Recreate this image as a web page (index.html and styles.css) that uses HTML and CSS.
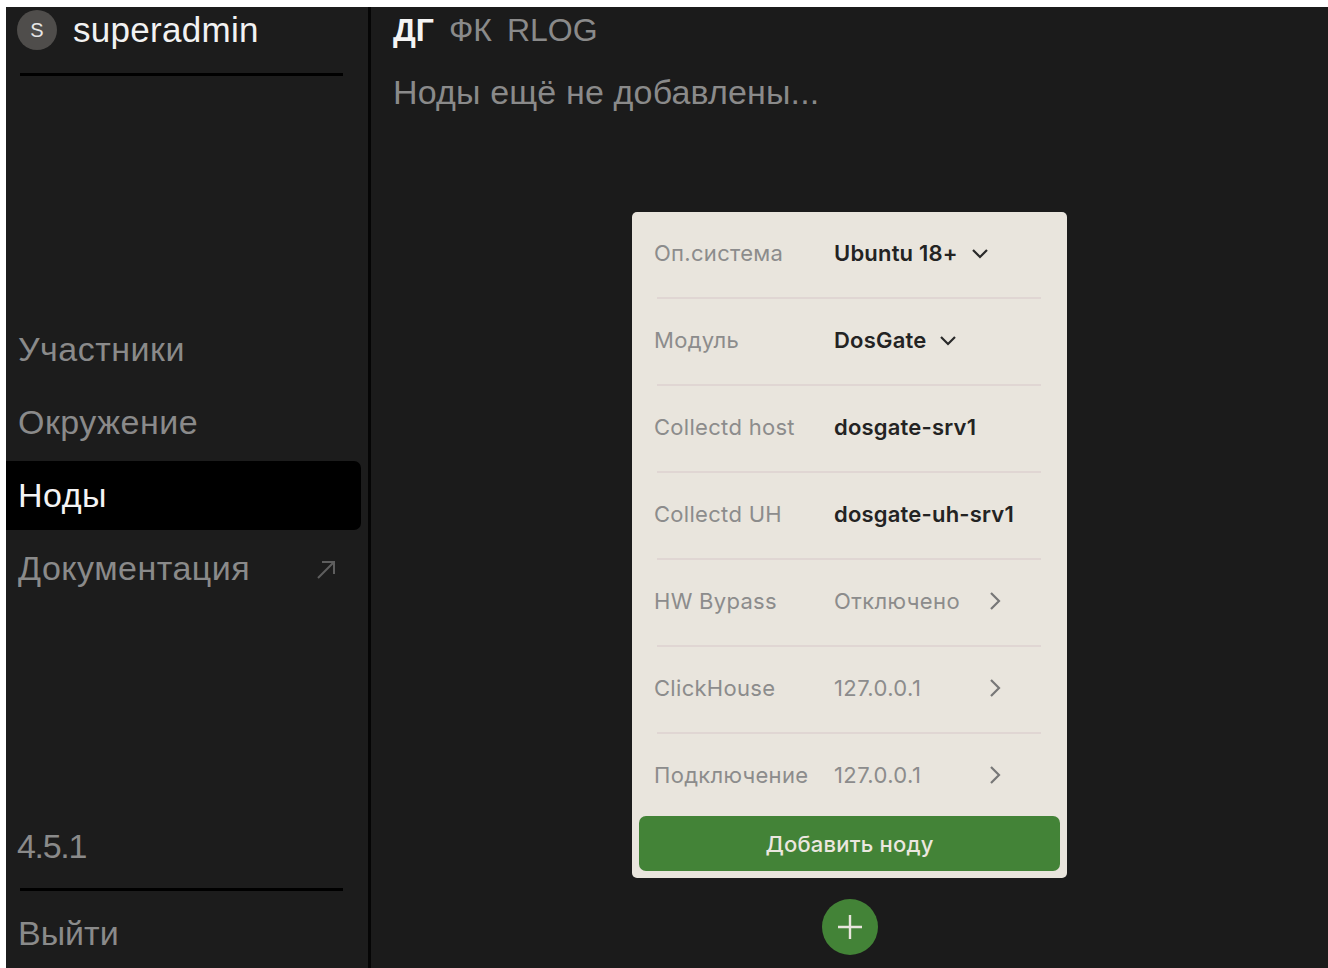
FILE: index.html
```html
<!DOCTYPE html>
<html lang="ru">
<head>
<meta charset="utf-8">
<title>Ноды</title>
<link rel="stylesheet" href="styles.css">
</head>
<body>
<div class="app">
  <aside class="sidebar">
    <div class="user">
      <span class="avatar">S</span>
      <span class="user-name">superadmin</span>
    </div>
    <div class="rule"></div>
    <nav class="nav">
      <a class="nav-item">Участники</a>
      <a class="nav-item">Окружение</a>
      <a class="nav-item active">Ноды</a>
      <a class="nav-item external">Документация
        <svg class="ext-icon" viewBox="0 0 24 24" width="24" height="24"><path d="M4 21L20 5M8 5h12v12" fill="none" stroke="currentColor" stroke-width="2"/></svg>
      </a>
    </nav>
    <div class="version">4.5.1</div>
    <div class="rule"></div>
    <a class="logout">Выйти</a>
  </aside>
  <main class="main">
    <div class="tabs">
      <span class="tab current">ДГ</span>
      <span class="tab">ФК</span>
      <span class="tab">RLOG</span>
    </div>
    <p class="empty">Ноды ещё не добавлены...</p>
    <div class="stage">
      <section class="card">
        <div class="row">
          <span class="label">Оп.система</span>
          <span class="value strong">Ubuntu 18+
            <svg class="chev-down" viewBox="0 0 20 20" width="20" height="20"><path d="M3 7l7 7 7-7" fill="none" stroke="currentColor" stroke-width="2.2"/></svg>
          </span>
        </div>
        <div class="sep"></div>
        <div class="row">
          <span class="label">Модуль</span>
          <span class="value strong">DosGate
            <svg class="chev-down" viewBox="0 0 20 20" width="20" height="20"><path d="M3 7l7 7 7-7" fill="none" stroke="currentColor" stroke-width="2.2"/></svg>
          </span>
        </div>
        <div class="sep"></div>
        <div class="row">
          <span class="label">Collectd host</span>
          <span class="value strong">dosgate-srv1</span>
        </div>
        <div class="sep"></div>
        <div class="row">
          <span class="label">Collectd UH</span>
          <span class="value strong">dosgate-uh-srv1</span>
        </div>
        <div class="sep"></div>
        <div class="row">
          <span class="label">HW Bypass</span>
          <span class="value muted">Отключено</span>
          <svg class="chev-right" viewBox="0 0 16 22" width="16" height="22"><path d="M3 3l8 8-8 8" fill="none" stroke="currentColor" stroke-width="2.2"/></svg>
        </div>
        <div class="sep"></div>
        <div class="row">
          <span class="label">ClickHouse</span>
          <span class="value muted">127.0.0.1</span>
          <svg class="chev-right" viewBox="0 0 16 22" width="16" height="22"><path d="M3 3l8 8-8 8" fill="none" stroke="currentColor" stroke-width="2.2"/></svg>
        </div>
        <div class="sep"></div>
        <div class="row last">
          <span class="label">Подключение</span>
          <span class="value muted">127.0.0.1</span>
          <svg class="chev-right" viewBox="0 0 16 22" width="16" height="22"><path d="M3 3l8 8-8 8" fill="none" stroke="currentColor" stroke-width="2.2"/></svg>
        </div>
        <button class="add-btn">Добавить ноду</button>
      </section>
      <button class="fab" aria-label="Добавить">
        <svg viewBox="0 0 32 32" width="32" height="32"><path d="M16 4v24M4 16h24" fill="none" stroke="currentColor" stroke-width="2.4"/></svg>
      </button>
    </div>
  </main>
</div>
</body>
</html>
```

FILE: styles.css
```css
html, body {
  height: 100%;
}

body {
  margin: 7px 0 0 6px;
  background: #ffffff;
  overflow: hidden;
  font-family: "Liberation Sans", Arial, sans-serif;
}

.app {
  display: flex;
  height: 961px;
  background: #1b1b1b;
}

/* ---------- sidebar ---------- */
.sidebar {
  width: 362px;
  flex: none;
  border-right: 3px solid #050505;
  display: flex;
  flex-direction: column;
  background: #1c1c1c;
}

.user {
  display: flex;
  align-items: center;
  gap: 16px;
  height: 46px;
  padding-left: 11px;
}

.avatar {
  width: 40px;
  height: 40px;
  border-radius: 50%;
  background: #4f4d4b;
  color: #e6e6e6;
  font-size: 20px;
  display: flex;
  align-items: center;
  justify-content: center;
}

.user-name {
  color: #f2f2f2;
  font-size: 35px;
  letter-spacing: 0.3px;
}

.rule {
  height: 3px;
  background: #000;
  margin: 20px 25px 0 14px;
}

.nav {
  display: flex;
  flex-direction: column;
  margin-top: 239px;
}

.nav-item {
  display: flex;
  align-items: center;
  justify-content: space-between;
  height: 69px;
  padding: 0 23px 0 12px;
  margin-right: 7px;
  margin-bottom: 4px;
  border-radius: 0 7px 7px 0;
  color: #8a8a8a;
  font-size: 34px;
  letter-spacing: 0.5px;
}

.nav-item.active {
  background: #000;
  color: #f4f4f4;
}

.ext-icon {
  color: #5e5e5e;
}

.version {
  margin-top: auto;
  padding-left: 11px;
  color: #8a8a8a;
  font-size: 34px;
  letter-spacing: -1.3px;
}

.version + .rule {
  margin-top: 22px;
}

.logout {
  display: block;
  color: #8a8a8a;
  font-size: 34px;
  padding: 23px 0 15px 12px;
}

/* ---------- main ---------- */
.main {
  flex: 1;
  display: flex;
  flex-direction: column;
  padding-left: 22px;
}

.tabs {
  display: flex;
  gap: 15px;
  font-size: 32px;
  color: #8a8a8a;
  height: 47px;
  align-items: center;
}

.tab.current {
  color: #f4f4f4;
  font-weight: 700;
}

.empty {
  margin: 19px 0 0;
  color: #8a8a8a;
  font-size: 34px;
  letter-spacing: 0.15px;
}

.stage {
  display: flex;
  flex-direction: column;
  align-items: center;
  margin-left: -22px;
  margin-top: 100px;
}

.card {
  width: 435px;
  background: #e9e5dd;
  border-radius: 5px;
  padding: 0 7px 7px;
  box-sizing: border-box;
  font-family: Inter, "Noto Sans", sans-serif;
  font-size: 22px;
}

.row {
  display: flex;
  align-items: center;
  height: 85px;
  padding: 0 0 3px 15px;
  box-sizing: border-box;
}

.row.last {
  height: 82px;
  padding-bottom: 0;
}

.label {
  width: 180px;
  flex: none;
  color: #8c8c8c;
  letter-spacing: 0.3px;
  white-space: nowrap;
}

.value {
  display: flex;
  align-items: center;
  gap: 12px;
  white-space: nowrap;
}

.value.strong {
  color: #232323;
  font-weight: 600;
  letter-spacing: 0.2px;
}

.value.muted {
  color: #8c8c8c;
  letter-spacing: 0.4px;
}

.chev-down {
  color: #2a2a2a;
}

.chev-right {
  margin-left: auto;
  margin-right: 56px;
  color: #777;
}

.sep {
  height: 2px;
  background: #e0d6d3;
  margin: 0 19px 0 18px;
}

.add-btn {
  display: block;
  width: 100%;
  height: 55px;
  border: 0;
  border-radius: 7px;
  background: #438337;
  color: #ebe7df;
  font-family: Inter, "Noto Sans", sans-serif;
  font-size: 22px;
  font-weight: 500;
  letter-spacing: 0.2px;
}

.fab {
  margin-top: 21px;
  width: 56px;
  height: 56px;
  border-radius: 50%;
  border: 0;
  padding: 0;
  background: #438337;
  color: #e9e5dd;
  display: flex;
  align-items: center;
  justify-content: center;
}
```
